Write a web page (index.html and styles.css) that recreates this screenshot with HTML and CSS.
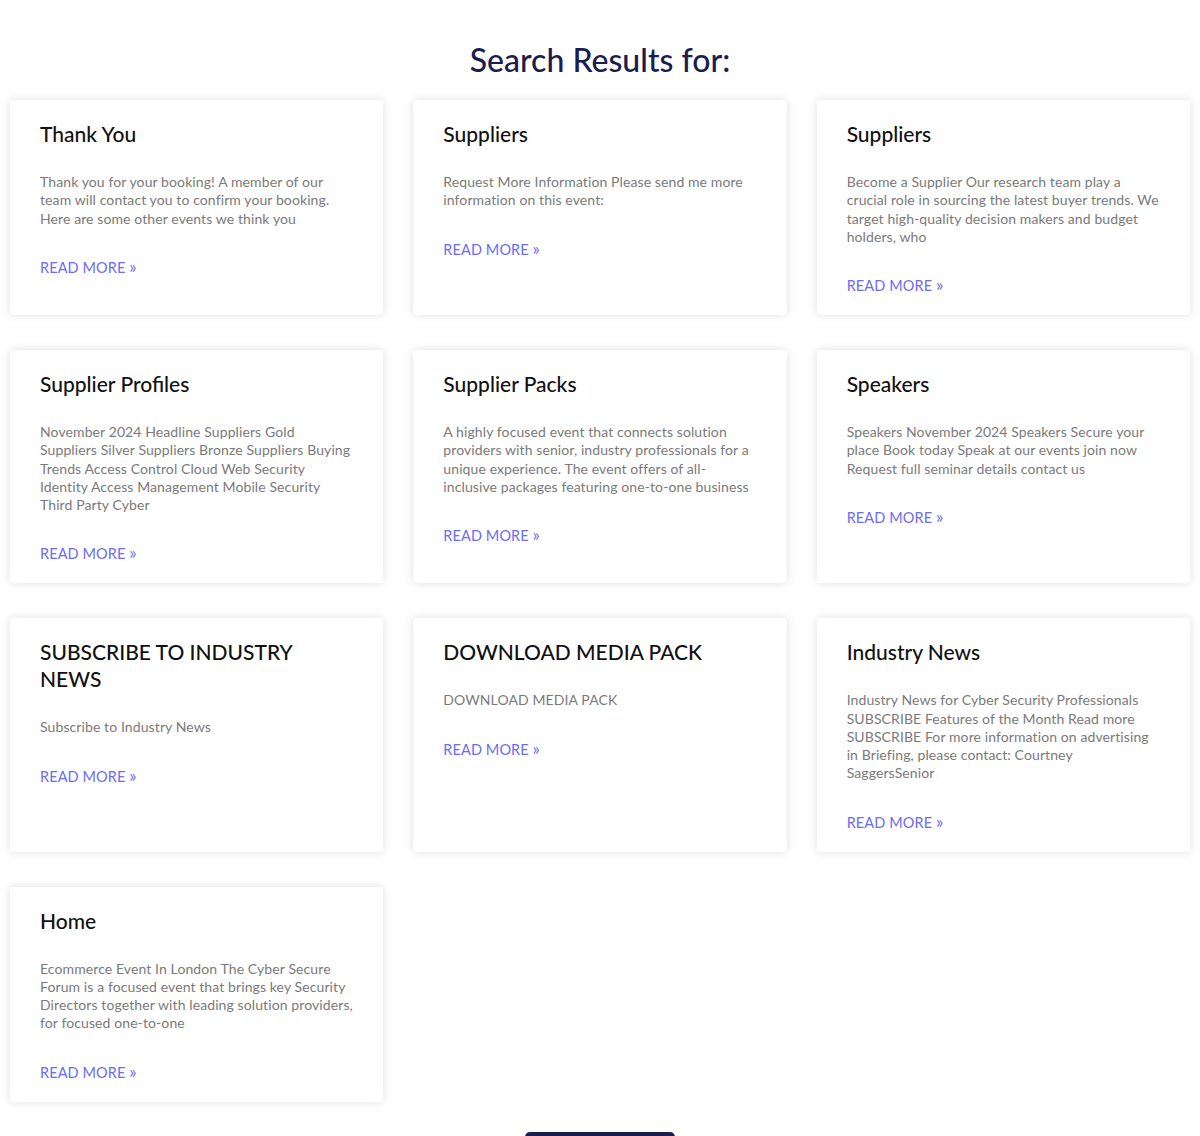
FILE: index.html
```html
<!DOCTYPE html>
<html lang="en">
<head>
<meta charset="utf-8">
<title>Search Results</title>
<link rel="stylesheet" href="styles.css">
</head>
<body>
<main class="page">
  <h1 class="page-title">Search Results for:</h1>
  <div class="posts">
    <article class="card">
      <h3 class="card-title">Thank You</h3>
      <p class="card-excerpt">Thank you for your booking! A member of our team will contact you to confirm your booking. Here are some other events we think you</p>
      <a class="card-more" href="#">READ MORE <span class="raquo">»</span></a>
    </article>
    <article class="card">
      <h3 class="card-title">Suppliers</h3>
      <p class="card-excerpt">Request More Information Please send me more information on this event:</p>
      <a class="card-more" href="#">READ MORE <span class="raquo">»</span></a>
    </article>
    <article class="card">
      <h3 class="card-title">Suppliers</h3>
      <p class="card-excerpt">Become a Supplier Our research team play a crucial role in sourcing the latest buyer trends. We target high-quality decision makers and budget holders, who</p>
      <a class="card-more" href="#">READ MORE <span class="raquo">»</span></a>
    </article>
    <article class="card">
      <h3 class="card-title">Supplier Profiles</h3>
      <p class="card-excerpt">November 2024 Headline Suppliers Gold Suppliers Silver Suppliers Bronze Suppliers Buying Trends Access Control Cloud Web Security Identity Access Management Mobile Security Third Party Cyber</p>
      <a class="card-more" href="#">READ MORE <span class="raquo">»</span></a>
    </article>
    <article class="card">
      <h3 class="card-title">Supplier Packs</h3>
      <p class="card-excerpt">A highly focused event that connects solution providers with senior, industry professionals for a unique experience. The event offers of all-inclusive packages featuring one-to-one business</p>
      <a class="card-more" href="#">READ MORE <span class="raquo">»</span></a>
    </article>
    <article class="card">
      <h3 class="card-title">Speakers</h3>
      <p class="card-excerpt">Speakers November 2024 Speakers Secure your place Book today Speak at our events join now Request full seminar details contact us</p>
      <a class="card-more" href="#">READ MORE <span class="raquo">»</span></a>
    </article>
    <article class="card">
      <h3 class="card-title">SUBSCRIBE TO INDUSTRY NEWS</h3>
      <p class="card-excerpt">Subscribe to Industry News</p>
      <a class="card-more" href="#">READ MORE <span class="raquo">»</span></a>
    </article>
    <article class="card">
      <h3 class="card-title">DOWNLOAD MEDIA PACK</h3>
      <p class="card-excerpt">DOWNLOAD MEDIA PACK</p>
      <a class="card-more" href="#">READ MORE <span class="raquo">»</span></a>
    </article>
    <article class="card">
      <h3 class="card-title">Industry News</h3>
      <p class="card-excerpt">Industry News for Cyber Security Professionals SUBSCRIBE Features of the Month Read more SUBSCRIBE For more information on advertising in Briefing, please contact: Courtney SaggersSenior</p>
      <a class="card-more" href="#">READ MORE <span class="raquo">»</span></a>
    </article>
    <article class="card">
      <h3 class="card-title">Home</h3>
      <p class="card-excerpt">Ecommerce Event In London The Cyber Secure Forum is a focused event that brings key Security Directors together with leading solution providers, for focused one-to-one</p>
      <a class="card-more" href="#">READ MORE <span class="raquo">»</span></a>
    </article>
  </div>
  <div class="pager">
    <a class="pager-btn" href="#">Load More</a>
  </div>
</main>
</body>
</html>
```

FILE: styles.css
```css
* { box-sizing: border-box; }
html, body { margin: 0; padding: 0; background: #fff; }
body {
  font-family: "Lato", "Liberation Sans", sans-serif;
  color: #000;
}
.page {
  padding: 39px 10px 0;
}
.page-title {
  margin: 0 0 20px;
  text-align: center;
  font-size: 32px;
  line-height: 41px;
  font-weight: 500;
  color: #1b1d4e;
}
.posts {
  display: grid;
  grid-template-columns: repeat(3, 1fr);
  column-gap: 30px;
  row-gap: 35px;
}
.card {
  background: #fff;
  border-radius: 3px;
  box-shadow: 0 0 10px rgba(0, 0, 0, 0.13);
  padding: 20px 29px 20px 30px;
  display: flex;
  flex-direction: column;
  align-items: flex-start;
}
.card-title {
  margin: 0;
  font-size: 21px;
  line-height: 27px;
  font-weight: 500;
  color: #111;
}
.card-excerpt {
  margin: 26px 0 0;
  font-size: 14px;
  line-height: 18.25px;
  letter-spacing: 0.1px;
  color: #7a7a7a;
}
.card-more {
  margin-top: 31px;
  font-size: 14.5px;
  line-height: 18px;
  letter-spacing: 0.1px;
  color: #6c6cf7;
  text-decoration: none;
}
.raquo {
  font-size: 17px;
  line-height: 14px;
}
.pager {
  display: flex;
  justify-content: center;
  padding-top: 30px;
}
.pager-btn {
  display: block;
  width: 150px;
  height: 44px;
  background: #1b1d4e;
  border-radius: 5px;
  color: #fff;
  text-align: center;
  line-height: 44px;
  text-decoration: none;
  font-size: 14px;
}
```
